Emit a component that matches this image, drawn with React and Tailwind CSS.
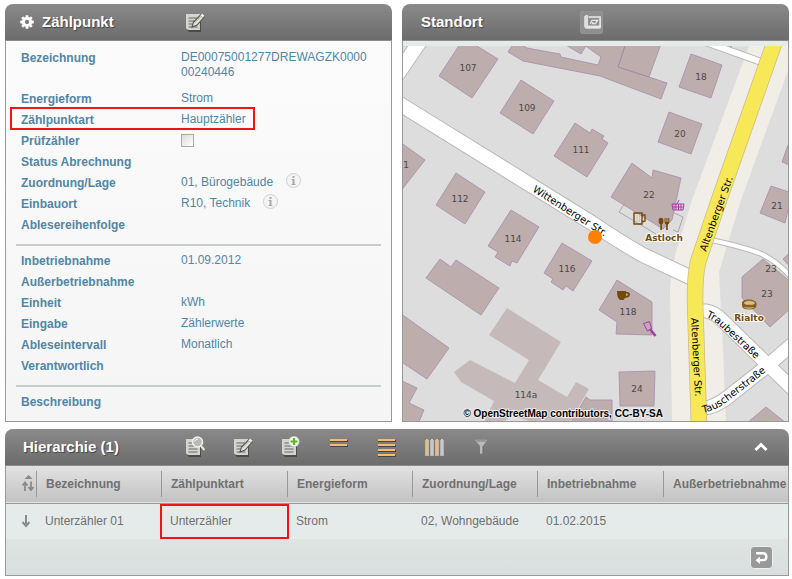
import React, { useState } from 'react';

const DETAILS = [
  [
    { label: 'Bezeichnung', value: 'DE00075001277DREWAGZK000000240446', tall: true },
    { label: 'Energieform', value: 'Strom' },
    { label: 'Zählpunktart', value: 'Hauptzähler', marked: true },
    { label: 'Prüfzähler', checkbox: true },
    { label: 'Status Abrechnung' },
    { label: 'Zuordnung/Lage', value: '01, Bürogebäude', info: true },
    { label: 'Einbauort', value: 'R10, Technik', info: true },
    { label: 'Ablesereihenfolge' },
  ],
  [
    { label: 'Inbetriebnahme', value: '01.09.2012' },
    { label: 'Außerbetriebnahme' },
    { label: 'Einheit', value: 'kWh' },
    { label: 'Eingabe', value: 'Zählerwerte' },
    { label: 'Ableseintervall', value: 'Monatlich' },
    { label: 'Verantwortlich' },
  ],
  [{ label: 'Beschreibung' }],
];

const COLUMNS = [
  { label: 'Bezeichnung', width: 'w-[125px]' },
  { label: 'Zählpunktart', width: 'w-[126px]' },
  { label: 'Energieform', width: 'w-[125px]' },
  { label: 'Zuordnung/Lage', width: 'w-[125px]' },
  { label: 'Inbetriebnahme', width: 'w-[126px]' },
  { label: 'Außerbetriebnahme', width: '' },
];

const ROWS = [['Unterzähler 01', 'Unterzähler', 'Strom', '02, Wohngebäude', '01.02.2015', '']];

// Building footprints
const BUILDINGS = [
  '439,76 464,38 498,59 472,98',
  '521,80 554,101 533,134 500,113',
  '575,123 590,133 592,129 604,136 602,139 608,143 587,177 554,156',
  '400,142 425,160 400,192',
  '456,173 485,192 465,224 436,205',
  '511,210 539,227 517,263 512,261 510,266 495,257 498,252 488,246',
  '562,243 592,261 573,291 566,286 563,290 551,282 553,279 544,273',
  '440,259 451,267 456,260 499,288 481,315 426,278',
  '400,313 449,348 427,379 400,361',
  '400,380 417,388 409,403 424,410 418,424 400,424',
  '586,397 590,400 612,400 612,424 570,424',
  '691,54 722,65 711,98 679,87',
  '669,112 702,124 691,154 658,142',
  '632,163 652,178 653,170 681,178 672,220 663,229 611,197',
  '771,186 792,193 785,223 760,213',
  '788,145 782,162 792,166 792,140',
  '763,259 792,283 792,307 770,327 742,298 742,277',
  '783,259 792,251 792,269',
  '617,280 652,302 652,335 616,334 617,322 599,310',
  '619,372 655,371 654,406 620,406',
  '747,423 766,407 786,423',
  '509,44 512,46 508,52 523,61 600,76 661,99 667,83 649,77 661,44 583,44 601,57 598,65 561,57 560,54 527,48 520,44',
  '564,44 581,54 587,44',
  '728,44 731,47 733,44',
];

const HOUSE_NUMBERS = [
  ['107', 468, 71], ['109', 527, 111], ['111', 581, 153], ['112', 460, 202],
  ['114', 513, 242], ['116', 567, 272], ['118', 628, 315], ['114a', 526, 398],
  ['18', 701, 80], ['20', 680, 137], ['22', 649, 198], ['21', 777, 209],
  ['23', 771, 272], ['23', 767, 297], ['24', 637, 392], ['1', 406, 168],
];

const ROADS = [
  { d: 'M425 34 L397 75', w: 14 },
  { d: 'M390 98 L592 223 Q618 241 643 255 L696 280', w: 14 },
  { d: 'M700 40 L764 63', w: 6 },
  { d: 'M711 240 Q740 246 759 253 Q776 260 792 278', w: 4 },
  { d: 'M697 311 L706 311 Q714 312 722 320 L766 363 L796 392', w: 13 },
  { d: 'M700 409 L710 407 Q719 404 728 397 L766 367 L796 341', w: 13 },
];

function GearIcon() {
  const teeth = [0, 45, 90, 135, 180, 225, 270, 315];
  return (
    <svg viewBox="0 0 14 14" className="h-[14px] w-[14px]" aria-hidden="true">
      {teeth.map((a) => (
        <rect key={a} x="5.6" y="0.2" width="2.8" height="3.4" rx="0.6" fill="#fff" transform={`rotate(${a} 7 7)`} />
      ))}
      <circle cx="7" cy="7" r="3.6" fill="none" stroke="#fff" strokeWidth="2.9" />
    </svg>
  );
}

function Sheet() {
  return (
    <g>
      <path d="M2 4h14v17H4l-2-2z" fill="#4c4c4c" />
      <path d="M1 3h14v16H4q-2.500-.2-3-2z" fill="#d6d4ce" />
      <path d="M3.500 7h9M3.500 10h9M3.500 13h9M3.500 16h9" stroke="#666" strokeWidth="1.200" />
    </g>
  );
}

function EditIcon() {
  return (
    <svg viewBox="0 0 20 22" className="h-[22px] w-5" aria-hidden="true">
      <Sheet />
      <path d="M7 16l1.500-5L16 3.500l3.200 2.600L12 14z" fill="#e9e6da" stroke="#555" strokeWidth="1.100" />
      <path d="M15 4.500l2.200-2.200 2.500 2.400-1.800 2z" fill="#f4f2ea" stroke="#777" strokeWidth=".6" />
      <path d="M9 12.500l6.500-6.500" stroke="#aaa69a" strokeWidth="1" />
    </svg>
  );
}

function SearchDocIcon() {
  return (
    <svg viewBox="0 0 20 22" className="h-[22px] w-5" aria-hidden="true">
      <Sheet />
      <circle cx="12.500" cy="6" r="5" fill="#b9b9b6" stroke="#f0efea" strokeWidth="1.600" />
      <path d="M9.500 5.500q1-2.500 3.500-2.500" stroke="#fff" fill="none" />
      <path d="M16 10l3.500 4" stroke="#e9e6da" strokeWidth="2.200" />
    </svg>
  );
}

function AddDocIcon() {
  return (
    <svg viewBox="0 0 20 22" className="h-[22px] w-5" aria-hidden="true">
      <Sheet />
      <circle cx="13" cy="5.500" r="5.200" fill="#f7f7f4" stroke="#bbb" strokeWidth=".7" />
      <path d="M13 2v7M9.500 5.500h7" stroke="#5cb81e" strokeWidth="2.200" />
    </svg>
  );
}

function BarsIcon({ rows }) {
  return (
    <svg viewBox="0 0 20 22" className="h-[22px] w-5" aria-hidden="true">
      {rows.map((y) => (
        <g key={y}>
          <rect x="1" y={y + 1} width="18" height="2" fill="#454545" />
          <rect x="1" y={y} width="17" height="2" fill="#f2bd70" />
        </g>
      ))}
    </svg>
  );
}

function ColumnsIcon() {
  const bars = ['#f2bd70', '#c9c9c9', '#f2bd70', '#c9c9c9'];
  return (
    <svg viewBox="0 0 20 22" className="h-[22px] w-5" aria-hidden="true">
      {bars.map((fill, i) => (
        <g key={i}>
          <rect x={i * 5} y="4" width="4" height="16" fill="#b5b5b5" />
          <rect x={i * 5 + 1} y="3" width="2" height="16" fill={fill} />
        </g>
      ))}
    </svg>
  );
}

function FilterIcon() {
  return (
    <svg viewBox="0 0 20 22" className="h-[22px] w-5" aria-hidden="true">
      <path d="M2 4h12l-4 6v7l-3 1v-8z" fill="#b9b9b9" />
      <path d="M2 3.500h12l-2 2.500H4z" fill="#999" />
      <path d="M10 10v7" stroke="#666" />
    </svg>
  );
}

function MapSheetIcon() {
  return (
    <svg viewBox="0 0 16 14" className="h-4 w-[18px]" aria-hidden="true">
      <path d="M1 2q1-2 3.500-1v9l11 0v3H3q-2-.3-2-2.500z" fill="#ddd" />
      <path d="M5 2.500h10.200v9H3.500" fill="none" stroke="#ececec" strokeWidth="1.400" />
      <path d="M6.500 8.500l1.500-3h5l-2 3h-2.500v-1.500" fill="none" stroke="#e5e5e5" strokeWidth="1.200" />
    </svg>
  );
}

const TOOLS = [
  { name: 'Anzeigen', icon: <SearchDocIcon /> },
  { name: 'Bearbeiten', icon: <EditIcon /> },
  { name: 'Hinzufügen', icon: <AddDocIcon /> },
  { name: 'Weniger Zeilen', icon: <BarsIcon rows={[3, 8]} /> },
  { name: 'Mehr Zeilen', icon: <BarsIcon rows={[3, 8, 13, 18]} /> },
  { name: 'Spalten', icon: <ColumnsIcon /> },
  { name: 'Filter', icon: <FilterIcon /> },
];

function PanelHeader({ children }) {
  return (
    <header className="flex h-[37px] items-center rounded-t-lg border-b border-[#8c8c8c] bg-linear-to-b from-[#8a8a8a] to-[#6c6c6c] text-[15px] leading-5 font-bold text-white">
      {children}
    </header>
  );
}

function DetailRow({ row }) {
  const id = row.label.toLowerCase();
  return (
    <div className={`relative flex pl-[5px] ${row.tall ? 'h-[41px]' : 'h-[21px]'}`}>
      <dt className="w-40 shrink-0 leading-[21px] font-bold">
        {row.checkbox ? <label htmlFor={id}>{row.label}</label> : row.label}
      </dt>
      <dd className={row.tall ? 'w-[190px] pt-[2px] leading-[15px] break-all' : 'flex leading-[19px]'}>
        {row.value}
        {row.checkbox && (
          <input
            id={id}
            type="checkbox"
            className="mt-[3px] h-[13px] w-[13px] appearance-none border border-[#a9a9a9] bg-linear-to-br from-[#dcdcd7] to-white"
          />
        )}
        {row.info && (
          <button
            type="button"
            aria-label={`Info zu ${row.label}`}
            className="ml-[13px] flex h-[15px] w-[15px] items-center justify-center rounded-full border border-[#cfcfcf] bg-[#f4f4f4]"
          >
            <svg viewBox="0 0 5 9" className="h-[9px] w-[5px]" aria-hidden="true">
              <path d="M1.500 0h2v2h-2zM.5 3h3v5h1v1h-4v-1h1v-4h-1z" fill="#aaa" />
            </svg>
          </button>
        )}
      </dd>
      {row.marked && (
        <span className="pointer-events-none absolute -top-[3px] bottom-px -left-1.5 w-[245px] border-2 border-[#f11414]" />
      )}
    </div>
  );
}

function StreetMap() {
  return (
    <svg
      viewBox="403 46 385 375"
      className="block h-auto w-full bg-[#dddddd]"
      role="img"
      aria-label="Karte"
      fontFamily="'DejaVu Sans', sans-serif"
      fontSize="9"
    >
      <path
        d="M749 46L692 200L677 248Q670 275 670 293L672 422H726L722 327L719 272L741 200L789 68V46z"
        fill="#f1eee8"
      />

      {/* large building without outline */}
      <path
        d="M507 308L561 342L538 380L567 397L576 382L589 389L570 422H533L512 416L503 422H484L494 401L461 382L454 372L470 360L515 383L529 360L489 335z"
        fill="#c5b9b9"
      />
      {BUILDINGS.map((points) => (
        <polygon key={points} points={points} fill="#beadad" stroke="#a68bb0" strokeWidth=".8" />
      ))}
      <path d="M625 46L618 67L649 77" fill="none" stroke="#9a7ba8" strokeWidth=".8" />
      <path d="M625 203L619 212L656 234M672 212L683 217L678 232L673 230" fill="none" stroke="#a3a3a3" strokeWidth=".9" />

      {/* road casings first, then the surfaces so that junctions join */}
      {ROADS.map((r) => (
        <path key={r.d} d={r.d} fill="none" stroke="#b9b9b9" strokeWidth={r.w + 2} />
      ))}
      {ROADS.map((r) => (
        <path key={r.d} d={r.d} fill="none" stroke="#fff" strokeWidth={r.w} />
      ))}
      <path d="M776 38L719 200L698 262Q695 275 695 300L699 424" fill="none" stroke="#cdb98c" strokeWidth="16.500" />
      <path d="M776 38L719 200L698 262Q695 275 695 300L699 424" fill="none" stroke="#f7e858" strokeWidth="15" />

      <g fill="#444" textAnchor="middle" opacity=".95">
        {HOUSE_NUMBERS.map(([n, x, y]) => (
          <text key={`${x}-${y}`} x={x} y={y}>
            {n}
          </text>
        ))}
      </g>

      <g fill="#000" fontSize="10">
        <path id="witt" d="M532 191L592 229L616 244" fill="none" />
        <path id="traube" d="M706 317Q714 320 722 328L774 376" fill="none" />
        <path id="tauscher" d="M703 413Q714 411 724 404L780 361" fill="none" />
        <text>
          <textPath href="#witt">Wittenberger Str.</textPath>
        </text>
        <text>
          <textPath href="#traube">Traubestraße</textPath>
        </text>
        <text>
          <textPath href="#tauscher">Tauscherstraße</textPath>
        </text>
        <text transform="translate(706 252) rotate(-70)">Altenberger Str.</text>
        <text transform="translate(691 318) rotate(87)">Altenberger Str.</text>
      </g>

      {/* beer mug */}
      <g fill="none" stroke="#734a08" strokeWidth="1.400">
        <path d="M634 213h8v11h-8zM642 215h3v6l-3 1" />
        <path d="M637 215v7M639.500 215v7" stroke="#d8c49a" strokeWidth="1" />
      </g>
      {/* spoon and fork */}
      <g fill="#734a08">
        <ellipse cx="661" cy="221" rx="2.400" ry="3.200" />
        <path d="M660.300 223h1.600v7h-1.600zM664.500 218h1v4h.9v-4h1v4h.9v-4h1v4q0 2-1.500 2.500v5.500h-1.700v-5.500q-1.500-.5-1.500-2.500z" />
      </g>
      {/* coffee cup */}
      <path d="M617 291h9v1q4-.5 4 2.500t-5 3.500l-1.500 2H620q-3-2-3-9zM626 293.500v2.500q2-.3 2-1.500t-2-1z" fill="#734a08" />
      {/* bread roll */}
      <path d="M742 303q0-3.500 6.500-3.500t8 3.500v3q-1 3.500-7.500 3.500t-7-3.500z" fill="#8a5f1e" />
      <path d="M744 303q1-2 5-2t6 2l-2 1.500h-7zM744 307.500q5 2 10 0" fill="#d9bd8d" stroke="#d9bd8d" strokeWidth=".5" />
      {/* shopping basket */}
      <g fill="none" stroke="#ac39ac" strokeWidth="1">
        <path d="M672 204h12l-1 6h-10zM673 207h10M676 204v6M678.500 204v6M681 204v6M677 204l2-4" />
      </g>
      {/* hammer */}
      <path d="M643.500 323.500l6-2 2 7-4 2.500z" fill="none" stroke="#ac39ac" strokeWidth="1" />
      <path d="M650 329l5.500 7" stroke="#ac39ac" strokeWidth="2.600" />

      <g fill="#734a08" stroke="#fff" strokeWidth="2" paintOrder="stroke" fontWeight="bold" textAnchor="middle">
        <text x="664" y="241">Astloch</text>
        <text x="749" y="321">Rialto</text>
      </g>

      <circle cx="595" cy="237" r="7" fill="#ff8000" />

      <text
        x="663"
        y="417"
        textAnchor="end"
        fontFamily="'Liberation Sans', Arial, sans-serif"
        fontSize="10"
        fontWeight="bold"
        stroke="#eee"
        strokeWidth="2"
        paintOrder="stroke"
      >
        © OpenStreetMap contributors, CC-BY-SA
      </text>
    </svg>
  );
}

function HierarchyTable() {
  return (
    <table className="w-full table-fixed border-collapse text-left text-xs whitespace-nowrap text-[#707070]">
      <thead>
        <tr className="h-[37px] border-b border-[#999] bg-linear-to-b from-[#e2e2e2] to-[#c3c3c3]">
          <th className="w-[30px] p-0">
            <button type="button" aria-label="Sortieren" className="ml-[15px] block">
              <svg viewBox="0 0 14 18" className="h-[18px] w-[14px]" aria-hidden="true">
                <path d="M3.500 4L7.500 0l4 4z" fill="#8a8a8a" />
                <path d="M4 16V8M1.500 10.500L4 7.500l2.500 3M10 6.500v8M7.500 12l2.500 3 2.500-3" fill="none" stroke="#8a8a8a" strokeWidth="1.800" />
              </svg>
            </button>
          </th>
          {COLUMNS.map((c) => (
            <th key={c.label} className={`p-0 ${c.width}`}>
              <div className="border-l border-[#999] pl-[9px] leading-[26px]">{c.label}</div>
            </th>
          ))}
        </tr>
      </thead>
      <tbody>
        {ROWS.map((cells) => (
          <tr key={cells[0]} className="h-9 bg-[#e5ebea]">
            <td className="p-0">
              <svg viewBox="0 0 10 14" className="ml-[15px] h-[14px] w-[10px]" aria-hidden="true">
                <path d="M5 1v11M1.500 8l3.500 4 3.500-4" fill="none" stroke="#8a8a8a" strokeWidth="2" />
              </svg>
            </td>
            {cells.map((cell, i) => (
              <td key={COLUMNS[i].label} className="relative p-0 pl-[9px]">
                {cell}
                {i === 1 && (
                  <span className="pointer-events-none absolute inset-y-0 -left-px w-[129px] border-2 border-[#f11414]" />
                )}
              </td>
            ))}
          </tr>
        ))}
      </tbody>
    </table>
  );
}

export default function App() {
  const [open, setOpen] = useState(true);

  return (
    <main className="min-h-screen bg-white pt-1 pr-[3px] pl-[5px] font-['Liberation_Sans',Arial,sans-serif]">
      <div className="grid grid-cols-2 gap-[10px]">
        <section>
          <PanelHeader>
            <div className="flex w-[180px] items-center gap-2 pl-[15px]">
              <GearIcon />
              <h2 className="[text-shadow:1px_1px_1px_#444]">Zählpunkt</h2>
            </div>
            <button type="button" aria-label="Zählpunkt bearbeiten">
              <EditIcon />
            </button>
          </PanelHeader>
          <div className="border border-t-0 border-[#999] bg-linear-to-b from-[#fbfbfb] to-[#f5f5f5] px-[10px] pt-[7px] pb-2 text-xs text-[#5086a8]">
            {DETAILS.map((group, i) => (
              <React.Fragment key={i}>
                {i > 0 && <hr className="mt-2 mb-[5px] h-[2px] border-0 bg-[#c5cecd]" />}
                <dl>
                  {group.map((row) => (
                    <DetailRow key={row.label} row={row} />
                  ))}
                </dl>
              </React.Fragment>
            ))}
          </div>
        </section>

        <section>
          <PanelHeader>
            <h2 className="w-[178px] pl-[19px] [text-shadow:1px_1px_1px_#444]">Standort</h2>
            <button
              type="button"
              aria-label="Karte öffnen"
              className="flex h-[23px] w-[23px] items-center justify-center rounded bg-[#8f8f8f] shadow-[inset_0_0_1px_#bbb]"
            >
              <MapSheetIcon />
            </button>
          </PanelHeader>
          <div className="border border-t-0 border-[#999] bg-[#e5ebea] pt-[5px]">
            <StreetMap />
          </div>
        </section>
      </div>

      <section className="mt-[7px]">
        <PanelHeader>
          <h2 className="w-[180px] pl-[18px] [text-shadow:1px_1px_1px_#444]">Hierarchie (1)</h2>
          <div className="flex gap-7">
            {TOOLS.map((t) => (
              <button key={t.name} type="button" aria-label={t.name}>
                {t.icon}
              </button>
            ))}
          </div>
          <button type="button" aria-label="Einklappen" className="mr-[21px] ml-auto" onClick={() => setOpen(!open)}>
            <svg viewBox="0 0 14 10" className="h-[10px] w-[14px]" aria-hidden="true">
              <path d="M1.500 8L7 2.500 12.500 8" fill="none" stroke="#fff" strokeWidth="3" />
            </svg>
          </button>
        </PanelHeader>
        {open && (
          <div className="border border-t-0 border-[#999] bg-[#e5ebea]">
            <HierarchyTable />
            <div className="flex h-9 items-center justify-end bg-linear-to-b from-[#dfe4e3] to-[#d9dfde] pr-[15px]">
              <button
                type="button"
                aria-label="Zurück"
                className="flex h-[23px] w-[23px] items-center justify-center rounded border border-[#eee] bg-[#999]"
              >
                <svg viewBox="0 0 14 14" className="h-[15px] w-[15px]" aria-hidden="true">
                  <path d="M2 3h6.500q3 0 3 3.200T8.500 9.500H4" fill="none" stroke="#fff" strokeWidth="2.200" />
                  <path d="M1.500 9.500L5.500 6v7z" fill="#fff" />
                </svg>
              </button>
            </div>
          </div>
        )}
      </section>
    </main>
  );
}
